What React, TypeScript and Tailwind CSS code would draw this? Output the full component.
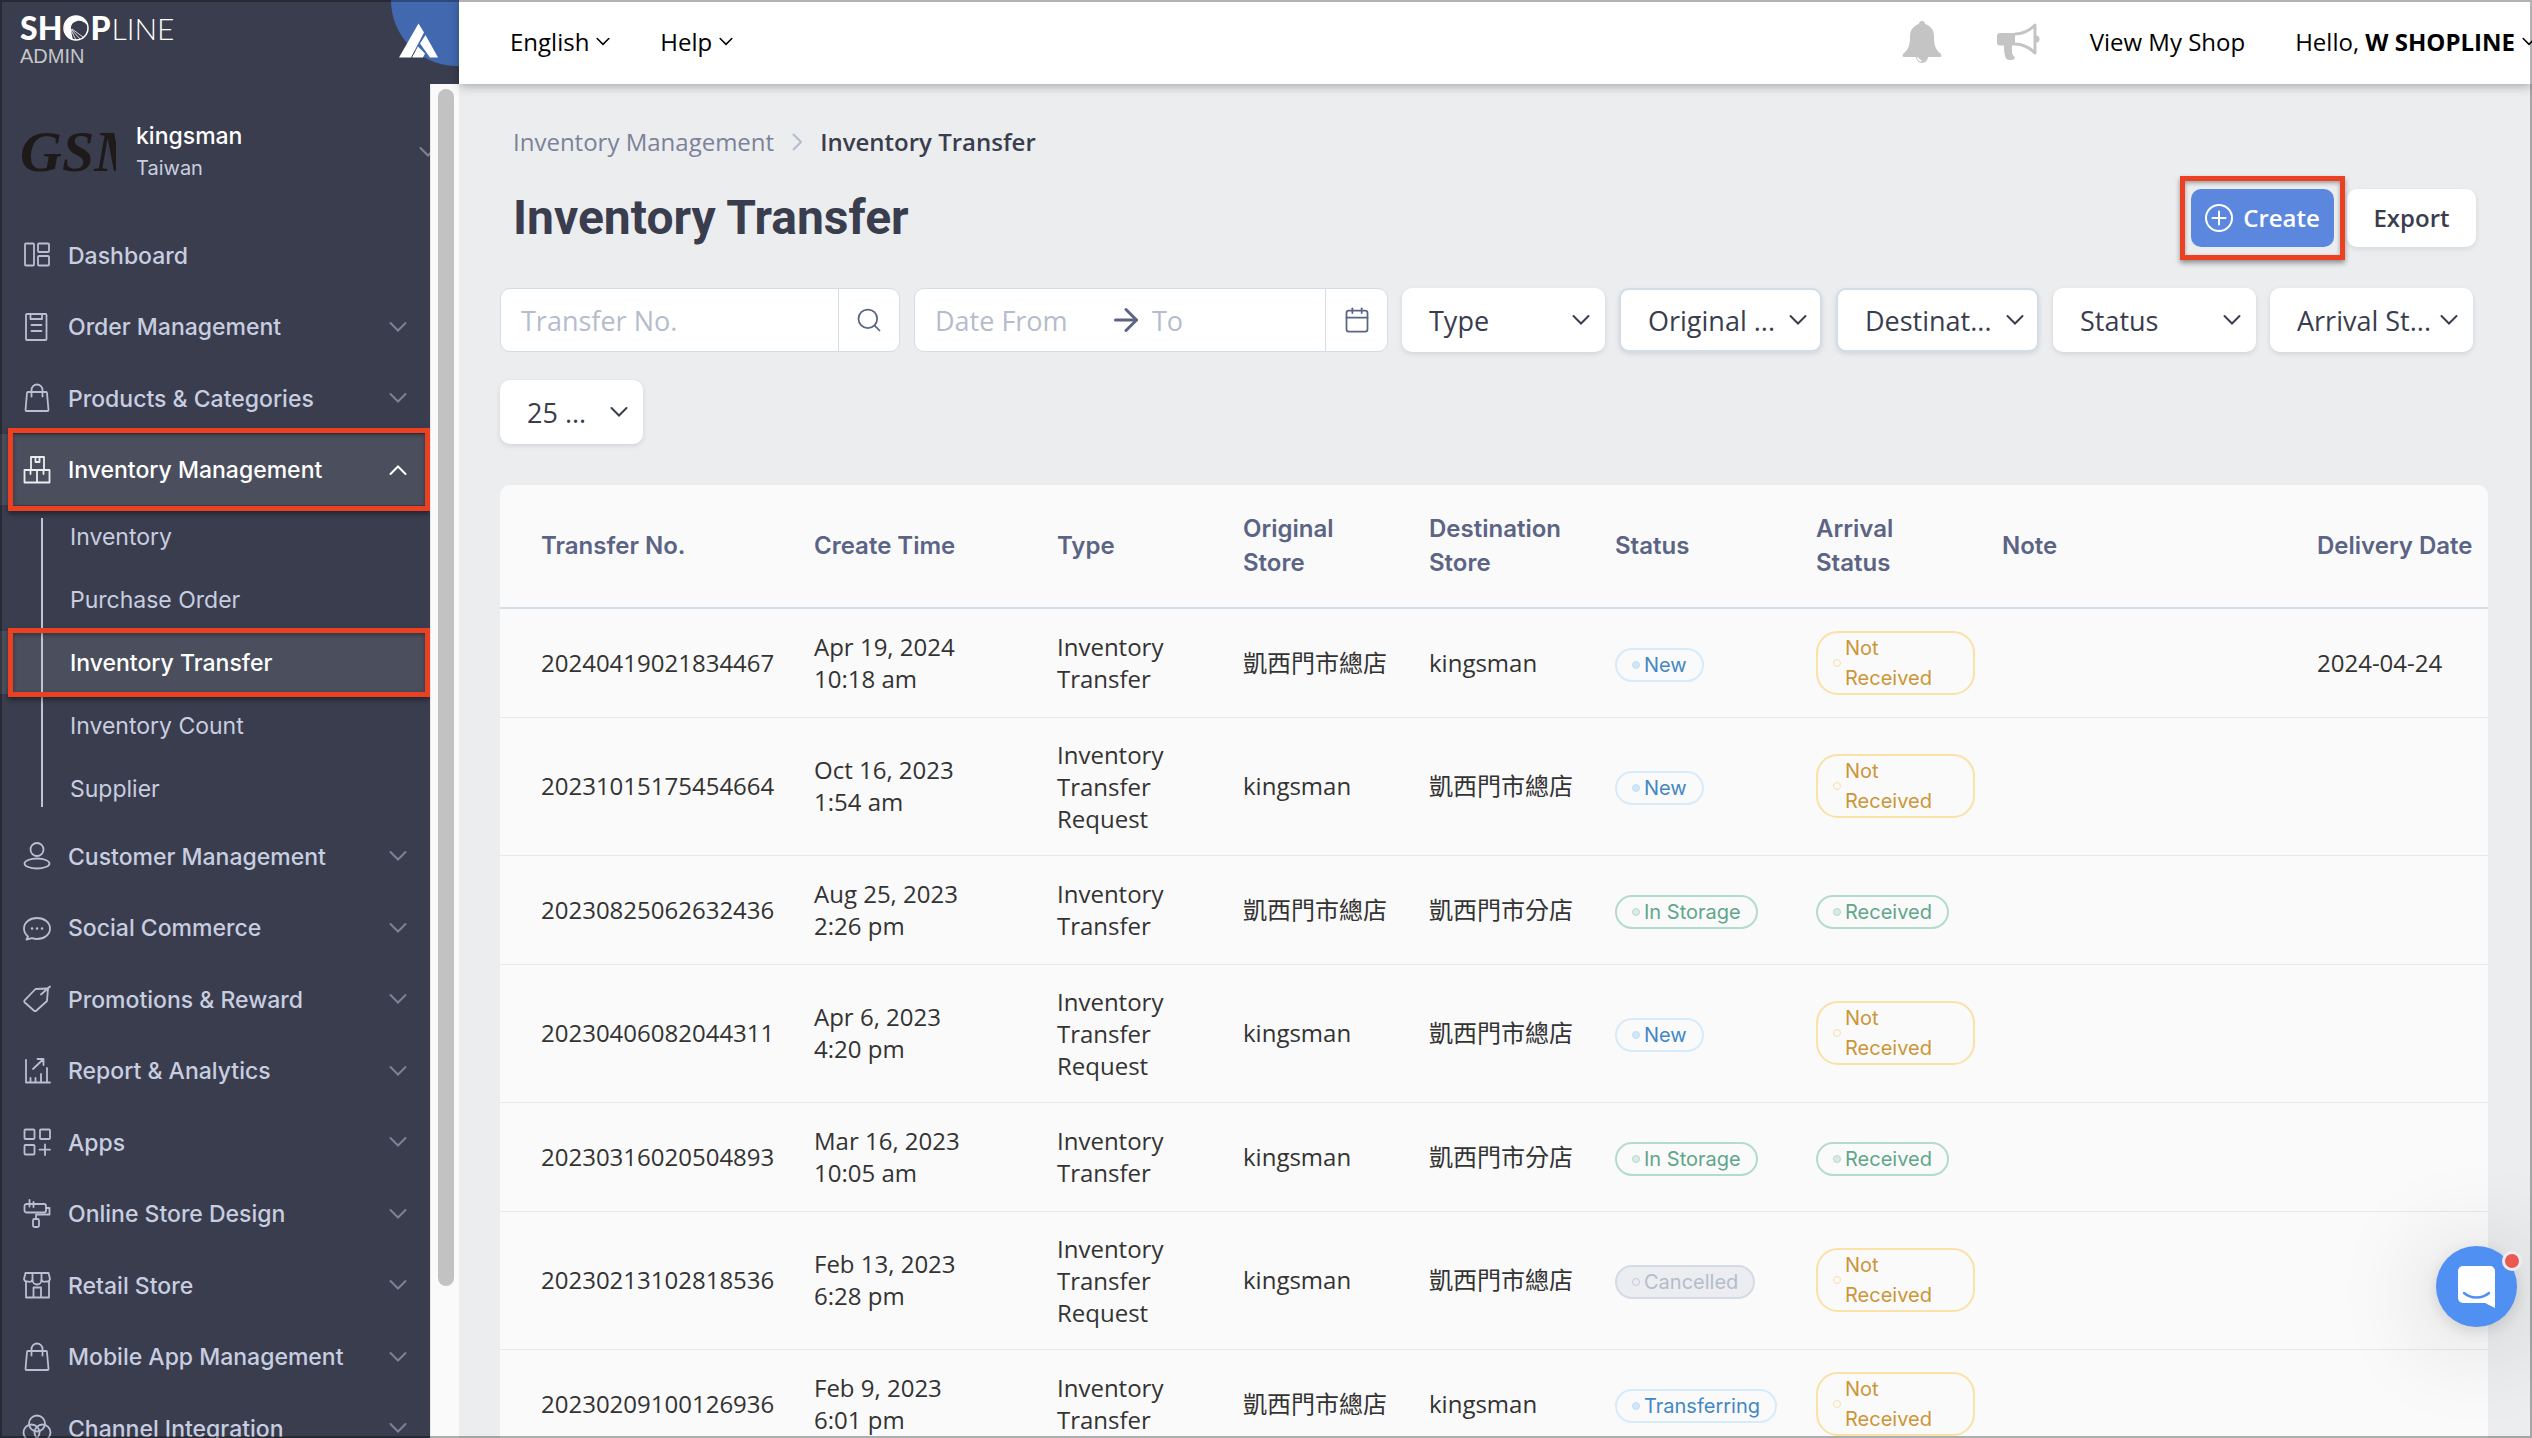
import React, { useState } from 'react';
import { Search, ArrowRight, Calendar } from 'lucide-react';

type Tone = 'blue' | 'green' | 'yellow' | 'gray';

type Transfer = {
  no: string;
  date: string;
  time: string;
  type: string;
  from: string;
  to: string;
  status: string;
  arrival: string;
  delivery?: string;
};

const SHOP_HQ = '凱西門市總店';
const SHOP_BRANCH = '凱西門市分店';

const transfers: Transfer[] = [
  { no: '20240419021834467', date: 'Apr 19, 2024', time: '10:18 am', type: 'Inventory Transfer', from: SHOP_HQ, to: 'kingsman', status: 'New', arrival: 'Not Received', delivery: '2024-04-24' },
  { no: '20231015175454664', date: 'Oct 16, 2023', time: '1:54 am', type: 'Inventory Transfer Request', from: 'kingsman', to: SHOP_HQ, status: 'New', arrival: 'Not Received' },
  { no: '20230825062632436', date: 'Aug 25, 2023', time: '2:26 pm', type: 'Inventory Transfer', from: SHOP_HQ, to: SHOP_BRANCH, status: 'In Storage', arrival: 'Received' },
  { no: '20230406082044311', date: 'Apr 6, 2023', time: '4:20 pm', type: 'Inventory Transfer Request', from: 'kingsman', to: SHOP_HQ, status: 'New', arrival: 'Not Received' },
  { no: '20230316020504893', date: 'Mar 16, 2023', time: '10:05 am', type: 'Inventory Transfer', from: 'kingsman', to: SHOP_BRANCH, status: 'In Storage', arrival: 'Received' },
  { no: '20230213102818536', date: 'Feb 13, 2023', time: '6:28 pm', type: 'Inventory Transfer Request', from: 'kingsman', to: SHOP_HQ, status: 'Cancelled', arrival: 'Not Received' },
  { no: '20230209100126936', date: 'Feb 9, 2023', time: '6:01 pm', type: 'Inventory Transfer', from: SHOP_HQ, to: 'kingsman', status: 'Transferring', arrival: 'Not Received' },
];

const tones: Record<string, Tone> = {
  'New': 'blue',
  'Transferring': 'blue',
  'In Storage': 'green',
  'Received': 'green',
  'Not Received': 'yellow',
  'Cancelled': 'gray',
};

const pillStyles: Record<Tone, string> = {
  blue: 'border-[#d6ebfc] text-[#4387c3]',
  green: 'border-[#b3dccc] text-[#5fa68a]',
  yellow: 'border-[#fae1a5] text-[#cb9638]',
  gray: 'border-[#d3dce6] bg-[#ecedf0] text-[#b5bccc]',
};

const dotStyles: Record<Tone, string> = {
  blue: 'border-[#bfdff8] bg-[#d0e7fa]',
  green: 'border-[#b3dccc] bg-[#d9ebe4]',
  yellow: 'border-[#fae1a5]',
  gray: 'border-[#c3cad6]',
};

const icons: Record<string, React.ReactNode> = {
  dashboard: (
    <>
      <rect x="2" y="2.5" width="9" height="22" rx="1" />
      <rect x="15" y="2.5" width="11" height="8.5" rx="1" />
      <rect x="15" y="15" width="11" height="9.5" rx="1" />
    </>
  ),
  order: (
    <>
      <rect x="3" y="1" width="20.5" height="26" rx="1" />
      <path d="M7.5 1v5h11.5V1M8.5 12h10M8.5 18h10" />
    </>
  ),
  bag: (
    <>
      <path d="M5 8h18a1 1 0 0 1 1 1l1.500 17a1 1 0 0 1-1 1h-21a1 1 0 0 1-1-1L4 9a1 1 0 0 1 1-1z" />
      <path d="M8.500 12.500V6a5.500 5.500 0 0 1 11 0v6.500" />
    </>
  ),
  inventory: (
    <>
      <path d="M8 14V1h13v13M1.500 14h25v12.500h-25zM14 14v12.500" />
      <path d="M12.500 1v5h4V1M7.500 14v4M20.500 14v4" />
    </>
  ),
  user: (
    <>
      <circle cx="14" cy="7.500" r="6.500" />
      <ellipse cx="14" cy="21.500" rx="12.500" ry="5" />
    </>
  ),
  chat: (
    <>
      <path d="M5 22.500A10.500 10.500 0 0 1 1 14.500C1 8.500 6.500 4 14 4s13 4.500 13 10.500S21.500 25 14 25c-2 0-3.500-.3-5-.8L3.500 25.500z" />
      <path d="M9 14.500h.1M14 14.500h.1M19 14.500h.1" strokeWidth="2.500" />
    </>
  ),
  tag: (
    <>
      <path d="M12.500 4 25 3.500l-1 12.500-10.500 9.500c-.8.800-1.800.800-2.700 0L1.800 17.500c-.8-.8-.8-1.500 0-2.300z" />
      <path d="M18 9.500 27 1.500" />
    </>
  ),
  report: (
    <>
      <path d="M3 3v22.500h24M7.500 25v-4M12.500 25v-4M18 25v-8M24 25V11" />
      <path d="M10 12 20 2.500M14.500 2h6v6" />
    </>
  ),
  apps: (
    <>
      <rect x="1.500" y="1.500" width="10" height="9.500" rx="1" />
      <rect x="17" y="1.500" width="10" height="9.500" rx="1" />
      <rect x="1.500" y="17" width="10" height="9.500" rx="1" />
      <path d="M22 16.500V27M16.500 21.700H27" />
    </>
  ),
  design: (
    <>
      <rect x="1.500" y="4" width="21.500" height="8.500" rx="2" />
      <path d="M6.500 0v6.500M10.500 2v5M23 8h3.500v6.500H13V19" />
      <rect x="10" y="19" width="6" height="8" rx="1.500" />
    </>
  ),
  store: (
    <>
      <path d="M2.500 2h23l1.500 6a3.500 3.500 0 0 1-4.200 2.500A3.500 3.500 0 0 1 18.500 9a4.500 4.500 0 0 1-9 0 3.500 3.500 0 0 1-4.300 1.500A3.500 3.500 0 0 1 1 8z" />
      <path d="M9.500 2v7M18.500 2v7M3 10.500V26.500h23V10.500M10.500 26.500v-10h7.500v10" />
    </>
  ),
  channel: (
    <>
      <circle cx="14" cy="9.500" r="8" />
      <circle cx="8.500" cy="18.500" r="8" />
      <circle cx="19.500" cy="18.500" r="8" />
    </>
  ),
};

const menu = [
  { label: 'Dashboard', icon: 'dashboard', leaf: true },
  { label: 'Order Management', icon: 'order' },
  { label: 'Products & Categories', icon: 'bag' },
  { label: 'Inventory Management', icon: 'inventory', children: ['Inventory', 'Purchase Order', 'Inventory Transfer', 'Inventory Count', 'Supplier'] },
  { label: 'Customer Management', icon: 'user' },
  { label: 'Social Commerce', icon: 'chat' },
  { label: 'Promotions & Reward', icon: 'tag' },
  { label: 'Report & Analytics', icon: 'report' },
  { label: 'Apps', icon: 'apps' },
  { label: 'Online Store Design', icon: 'design' },
  { label: 'Retail Store', icon: 'store' },
  { label: 'Mobile App Management', icon: 'bag' },
  { label: 'Channel Integration', icon: 'channel' },
];

const Chevron = ({ className = '', up = false }: { className?: string; up?: boolean }) => (
  <svg viewBox="0 0 18 12" fill="none" stroke="currentColor" strokeWidth="2" strokeLinecap="round" className={className} aria-hidden="true">
    <path d={up ? 'M1.5 10 9 2.5l7.5 7.5' : 'M1.5 2 9 9.5 16.5 2'} />
  </svg>
);

const Highlight = ({ className }: { className: string }) => (
  <span className={`pointer-events-none absolute z-10 border-[5px] border-[#ec4023] shadow-[0_3px_5px_rgba(0,0,0,0.4),inset_0_2px_4px_rgba(0,0,0,0.35)] ${className}`} />
);

const Pill = ({ label }: { label: string }) => {
  const tone = tones[label];
  return (
    <span className={`inline-flex items-center gap-1 rounded-[22px] border-2 px-[15px] font-['Inter',sans-serif] text-[20px] leading-[30px] ${pillStyles[tone]}`}>
      <span className={`size-2 shrink-0 rounded-full border ${dotStyles[tone]}`} />
      <span>{label}</span>
    </span>
  );
};

const FilterSelect = ({ label, width = 'w-[203px]', outlined = false }: { label: string; width?: string; outlined?: boolean }) => (
  <div className={`relative ${width}`}>
    <select
      aria-label={label}
      className={`h-16 w-full appearance-none rounded-[10px] bg-white pt-[2px] pl-[27px] text-[27px] text-[#393d4d] shadow-[0_2px_5px_rgba(57,61,77,0.14)] ${outlined ? 'border-2 border-[#d3dde7]' : ''}`}
    >
      <option>{label}</option>
    </select>
    <Chevron className="pointer-events-none absolute top-[26px] right-[15px] w-[18px] text-[#393d4d]" />
  </div>
);

function Logo() {
  return (
    <div className="relative flex h-[84px] shrink-0 justify-between pl-5">
      <div className="pt-3">
        <div className="flex h-8 items-center gap-px font-['Lato',sans-serif] text-[32px] leading-8 text-white">
          <span className="font-black">SH</span>
          <svg viewBox="0 0 26 26" className="w-[26px]" aria-hidden="true">
            <circle cx="13" cy="13" r="12" fill="none" stroke="#fff" strokeWidth="1.5" />
            <path d="M10 25C2 23 0 15 2 9 5 1 13-1 20 3c3 2 4 5 5 8-3-4-7-6-11-5-3 1-6 3-6 7 0 3 1 8 2 12z" fill="#fff" />
            <circle cx="10.5" cy="9.5" r="1.2" fill="#393d4d" />
            <path d="M8 14l9 10M8 15l5 10M9 14l11 8" stroke="#fff" strokeWidth=".8" />
          </svg>
          <span className="font-black">P</span>
          <span className="text-[30px] font-light">LINE</span>
        </div>
        <div className="font-['Liberation_Sans',Arial,sans-serif] text-[20px] leading-6 text-[#c4c6cb]">ADMIN</div>
      </div>
      <svg viewBox="0 0 68 68" className="size-[68px]" aria-hidden="true">
        <path d="M0 0h68v66h-2A66 66 0 0 1 0 0z" fill="#4269b0" />
        <path d="M27.500 23.500 33 32.500 20 57.500H8zM34.500 35 47 57.500H39L29 43.500zM27 46.500l7 7-2 4H21z" fill="#fff" />
      </svg>
    </div>
  );
}

function Sidebar() {
  const [open, setOpen] = useState('Inventory Management');

  return (
    <aside className="flex w-[459px] shrink-0 flex-col bg-[#393d4d] font-['Inter',sans-serif] text-[23px] text-[#c8cde0]">
      <Logo />
      <div className="flex min-h-0 flex-1">
        <div className="min-w-0 flex-1 overflow-hidden">
          <button className="flex h-[135px] w-[437px] items-center pl-5 text-left">
            <span className="w-24 overflow-hidden font-['Liberation_Serif',serif] text-[58px] leading-[60px] font-bold text-[#1f1a1a] italic">GSM</span>
            <span className="ml-5 flex-1">
              <span className="block leading-8 font-medium text-white">kingsman</span>
              <span className="block text-[20px] leading-8">Taiwan</span>
            </span>
            <Chevron className="w-[18px] text-[#7d8296]" />
          </button>
          <ul>
            {menu.map(item => {
              const isOpen = item.label === open;
              return (
                <li key={item.label} className="group">
                  <button
                    onClick={() => setOpen(isOpen ? '' : item.label)}
                    className={`relative flex h-[71px] w-full items-center pr-[23px] pl-[23px] text-left font-medium group-odd:h-[72px] ${isOpen ? 'bg-[#4b4f5d] text-white' : ''}`}
                  >
                    <svg viewBox="0 0 28 28" fill="none" stroke="currentColor" strokeWidth="1.8" strokeLinecap="round" strokeLinejoin="round" className="size-7 overflow-visible opacity-90" aria-hidden="true">
                      {icons[item.icon]}
                    </svg>
                    <span className="ml-[17px] flex-1 pt-[2px] whitespace-nowrap">{item.label}</span>
                    {!item.leaf && <Chevron up={isOpen} className={`w-[18px] ${isOpen ? 'text-white' : 'text-[#7d8296]'}`} />}
                    {isOpen && item.children && <Highlight className="-inset-y-[6px] right-0 left-2" />}
                  </button>
                  {isOpen && item.children && (
                    <div className="relative">
                      <ul>
                        {item.children.map(child => (
                          <li key={child} className="relative">
                            <a
                              href="#"
                              className={`flex h-[63px] items-center pt-[2px] pl-[70px] ${child === 'Inventory Transfer' ? 'bg-[#4b4f5d] font-medium text-white' : ''}`}
                            >
                              {child}
                            </a>
                            {child === 'Inventory Transfer' && <Highlight className="-inset-y-[3px] right-0 left-2" />}
                          </li>
                        ))}
                      </ul>
                      <span className="absolute inset-y-[13px] left-[41px] w-[2px] bg-[#c0c5d4]" />
                    </div>
                  )}
                </li>
              );
            })}
          </ul>
        </div>
        {/* scroll track */}
        <div className="w-[29px] shrink-0 border-l border-[#e8e8e8] bg-[#fafafa] pt-[5px] pl-[7px]">
          <div className="h-[1197px] w-4 rounded-full bg-[#c2c2c2]" />
        </div>
      </div>
    </aside>
  );
}

function TopBar() {
  return (
    <header className="z-10 flex h-[84px] shrink-0 items-center justify-between bg-white pl-[51px] text-[24px] text-black shadow-[0_2px_10px_rgba(0,0,0,0.3)]">
      <nav className="flex gap-[50px]">
        <button className="flex items-center gap-[7px]">English <Chevron className="w-[14px]" /></button>
        <button className="flex items-center gap-[7px]">Help <Chevron className="w-[14px]" /></button>
      </nav>
      <div className="flex items-center whitespace-nowrap">
        <button aria-label="Notifications" className="mr-[55px]">
          <svg viewBox="0 0 40 42" className="w-10" fill="#c4c4c4" aria-hidden="true">
            <path d="M20 0a3 3 0 0 1 3 3c6 2 9 6 9 13 0 9 2 13 7 17 1 2 0 3-1 3H26a6 6 0 0 1-12 0H2c-1 0-2-1-1-3 5-4 7-8 7-17C8 9 11 5 17 3a3 3 0 0 1 3-3z" />
            <path d="M15.500 36.500a5 5 0 0 0 4 3.500" fill="none" stroke="#fff" strokeWidth="1.5" />
          </svg>
        </button>
        <button aria-label="Announcements" className="mr-[50px]">
          <svg viewBox="0 0 43 38" className="w-[43px]" fill="#c4c4c4" aria-hidden="true">
            <path d="M3 10h15v12.500h-3c0 5-1 9 3 12 0 2-3 2.500-5 2.500-3 0-4-1-5-4-1-4-1-7-1-10.500H3c-2 0-3-1-3-3V13c0-2 1-3 3-3z" />
            <path d="M18 11c8 0 15-4 20-9v28c-5-5-12-9-20-9" fill="none" stroke="#c4c4c4" strokeWidth="3" strokeLinejoin="round" />
            <path d="M39 12.500a3.500 3.500 0 0 1 0 7z" />
          </svg>
        </button>
        <a href="#" className="mr-[50px]">View My Shop</a>
        <button className="flex items-center gap-[7px]">
          <span>Hello, <b>W SHOPLINE</b></span>
          <Chevron className="-mr-1 w-[14px]" />
        </button>
      </div>
    </header>
  );
}

function Filters() {
  return (
    <form className="mt-[38px] flex flex-wrap gap-x-[14px] gap-y-7">
      <div className="flex h-16 w-[400px] rounded-[10px] border border-[#d3dde7] bg-white">
        <input aria-label="Transfer No." placeholder="Transfer No." className="min-w-0 flex-1 rounded-l-[10px] pt-[2px] pl-5 text-[27px] placeholder:text-[#b5bccc]" />
        <button type="button" aria-label="Search" className="flex w-[61px] items-center justify-center border-l border-[#d3dde7] text-[#5b6484]">
          <Search size={28} strokeWidth={1.5} />
        </button>
      </div>
      <div className="flex h-16 w-[474px] items-center rounded-[10px] border border-[#d3dde7] bg-white text-[#5b6484]">
        <input aria-label="Date From" placeholder="Date From" className="w-[193px] pt-[2px] pl-5 text-[27px] placeholder:text-[#b5bccc]" />
        <ArrowRight size={36} strokeWidth={2} />
        <input aria-label="To" placeholder="To" className="min-w-0 flex-1 pt-[2px] pl-2 text-[27px] placeholder:text-[#b5bccc]" />
        <button type="button" aria-label="Open calendar" className="flex h-full w-[62px] items-center justify-center border-l border-[#d3dde7]">
          <Calendar size={28} strokeWidth={1.5} />
        </button>
      </div>
      <FilterSelect label="Type" />
      <FilterSelect label="Original ..." outlined />
      <FilterSelect label="Destinat..." outlined />
      <FilterSelect label="Status" />
      <FilterSelect label="Arrival St..." />
      <FilterSelect label="25 ..." width="w-[143px]" />
    </form>
  );
}

function TransferTable() {
  return (
    <div className="mt-[41px] rounded-t-[10px] bg-[#fafafa]">
      <table className="w-full table-fixed text-left text-[24px] leading-8 text-[#333]">
        <colgroup>
          <col className="w-[314px]" />
          <col className="w-[243px]" />
          <col className="w-[186px]" />
          <col className="w-[186px]" />
          <col className="w-[186px]" />
          <col className="w-[201px]" />
          <col className="w-[186px]" />
          <col />
          <col className="w-[171px]" />
        </colgroup>
        <thead>
          <tr className="h-[123px] border-b-2 border-[#d3dde7] font-['Inter',sans-serif] text-[24px] leading-[34px] text-[#5b6484]">
            <th className="pl-[41px] font-semibold">Transfer No.</th>
            <th className="font-semibold">Create Time</th>
            <th className="font-semibold">Type</th>
            <th className="pr-10 font-semibold">Original Store</th>
            <th className="pr-10 font-semibold">Destination Store</th>
            <th className="font-semibold">Status</th>
            <th className="pr-10 font-semibold">Arrival Status</th>
            <th className="font-semibold">Note</th>
            <th className="font-semibold whitespace-nowrap">Delivery Date</th>
          </tr>
        </thead>
        <tbody>
          {transfers.map(row => (
            <tr key={row.no} className="h-[109px] border-b border-[#e6e8ec]">
              <td className="pl-[41px]">{row.no}</td>
              <td>{row.date}<br />{row.time}</td>
              <td className="pt-[21px] pb-5 pr-[27px]">{row.type}</td>
              <td>{row.from}</td>
              <td>{row.to}</td>
              <td><Pill label={row.status} /></td>
              <td className="pr-[27px]"><Pill label={row.arrival} /></td>
              <td />
              <td>{row.delivery}</td>
            </tr>
          ))}
        </tbody>
      </table>
    </div>
  );
}

export default function App() {
  return (
    <div className="relative flex h-screen overflow-hidden bg-[#ecedef] font-['Open_Sans','Noto_Sans_CJK_TC',sans-serif]">
      <Sidebar />
      <div className="flex min-w-0 flex-1 flex-col">
        <TopBar />
        <main className="min-h-0 flex-1 overflow-hidden pt-[42px] pr-11 pl-[41px]">
          <nav aria-label="Breadcrumb" className="flex h-8 items-center gap-[18px] pl-[13px] text-[24px]">
            <a href="#" className="text-[#7b8299]">Inventory Management</a>
            <svg viewBox="0 0 10 18" fill="none" stroke="#b5bccc" strokeWidth="2" className="w-[10px]" aria-hidden="true"><path d="m1 1 8 8-8 8" /></svg>
            <span className="font-semibold text-[#393d4d]">Inventory Transfer</span>
          </nav>
          <div className="mt-7 flex h-16 items-center justify-between pr-3 pl-[13px]">
            <h1 className="font-['Roboto',sans-serif] text-[48px] font-bold text-[#393d4d]">Inventory Transfer</h1>
            <div className="flex gap-[13px] text-[24px] font-semibold">
              <div className="relative">
                <button className="flex h-[58px] w-[143px] items-center justify-center gap-[10px] rounded-[10px] bg-[#5c87df] text-white">
                  <svg viewBox="0 0 28 28" fill="none" stroke="currentColor" strokeWidth="2" strokeLinecap="round" className="w-7" aria-hidden="true">
                    <circle cx="14" cy="14" r="13" />
                    <path d="M14 7.500v13M7.500 14h13" />
                  </svg>
                  Create
                </button>
                <Highlight className="-inset-x-[11px] -inset-y-[13px]" />
              </div>
              <button className="h-[58px] w-[129px] rounded-[10px] bg-white text-[#393d4d] shadow-[0_2px_5px_rgba(57,61,77,0.12)]">Export</button>
            </div>
          </div>
          <Filters />
          <TransferTable />
        </main>
      </div>

      <button aria-label="Open chat" className="absolute right-[15px] bottom-[111px] z-20 flex size-[81px] items-center justify-center rounded-full bg-[#4f90f2] shadow-[0_4px_14px_rgba(0,0,0,0.12),0_8px_100px_rgba(0,0,0,0.22)]">
        <svg viewBox="0 0 37 42" className="w-[37px]" aria-hidden="true">
          <path d="M5 0h27a5 5 0 0 1 5 5v37l-10-5H5a5 5 0 0 1-5-5V5a5 5 0 0 1 5-5z" fill="#fff" />
          <path d="M6 27c7 6 18 6 25 0" fill="none" stroke="#4f90f2" strokeWidth="2.5" strokeLinecap="round" />
        </svg>
        <span className="absolute top-[5px] -right-[5px] size-5 rounded-full border-[3px] border-[#ecedef] bg-[#eb5a50]" />
      </button>

      <div className="pointer-events-none absolute inset-0 z-30 border-2 border-black/30" />
    </div>
  );
}
